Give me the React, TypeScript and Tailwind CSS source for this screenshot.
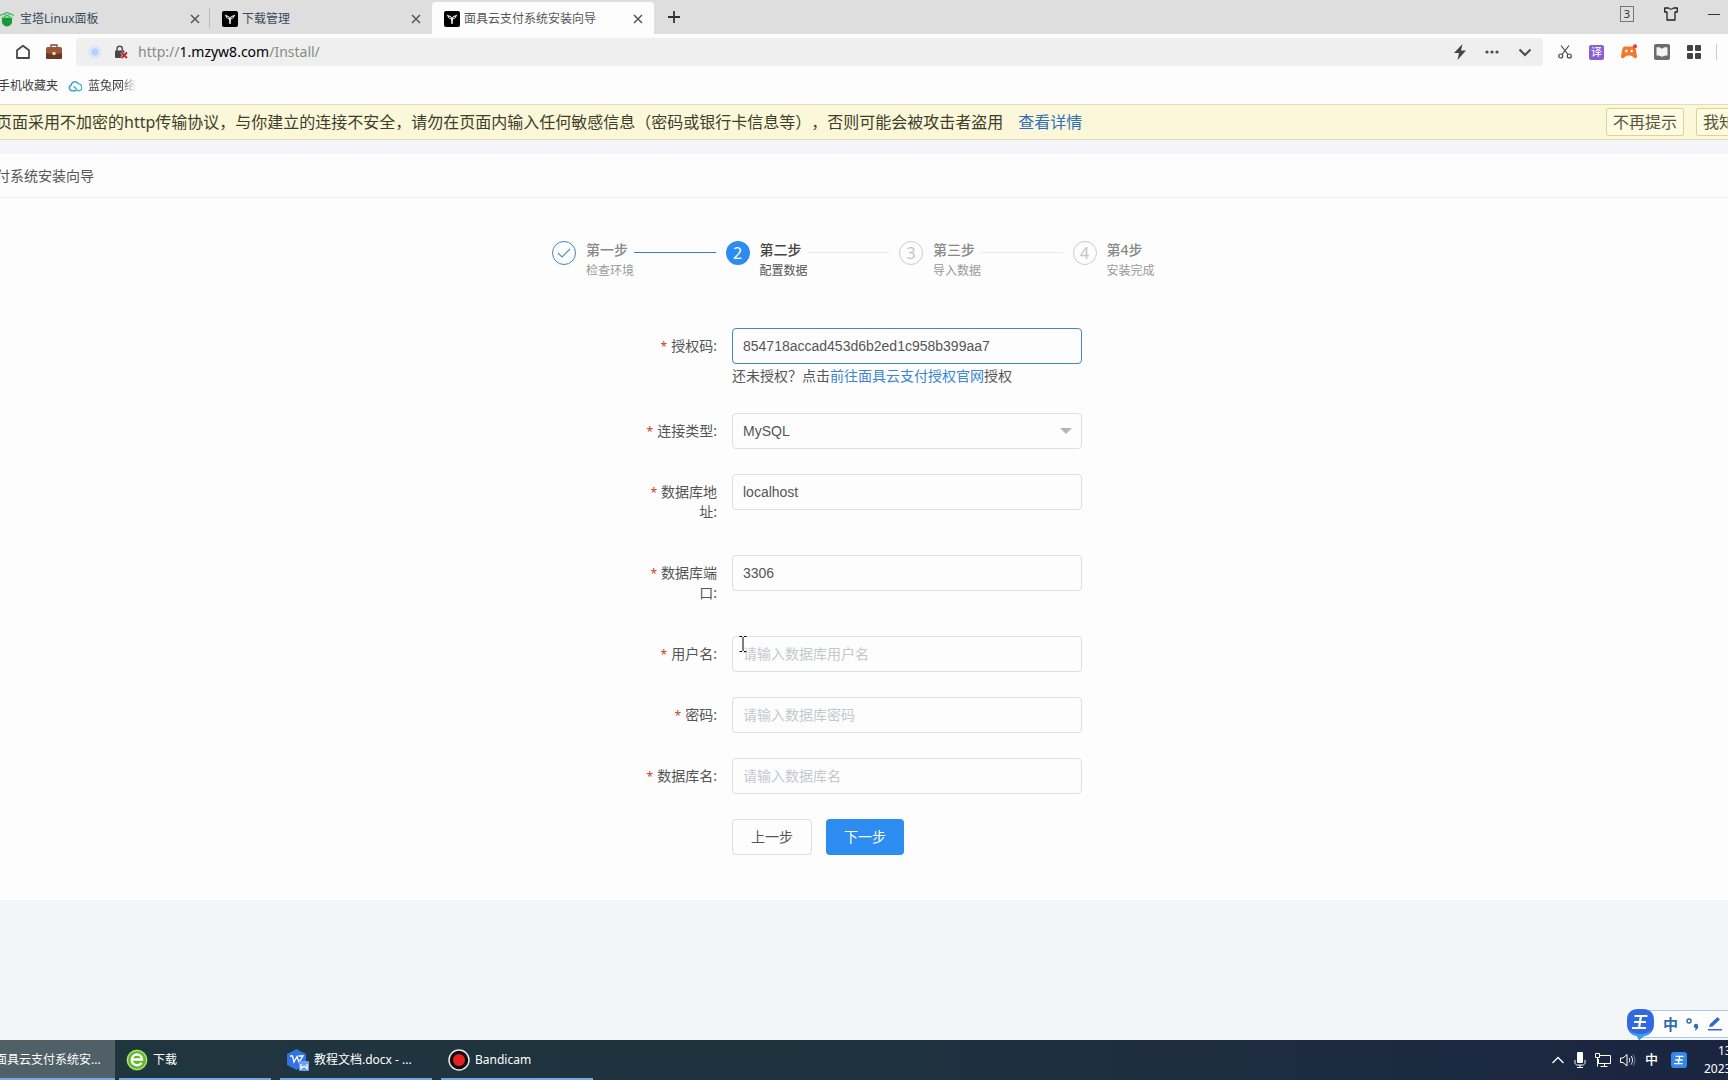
import { useState } from 'react';
import type { ReactNode } from 'react';

interface ITab {
  title: string;
  icon: ReactNode;
}

interface IField {
  id: string;
  label: string;
  value: string;
  placeholder?: string;
}

const fields: IField[] = [
  { id: 'hostname', label: '数据库地址', value: 'localhost' },
  { id: 'hostport', label: '数据库端口', value: '3306' },
  { id: 'username', label: '用户名', value: '', placeholder: '请输入数据库用户名' },
  { id: 'password', label: '密码', value: '', placeholder: '请输入数据库密码' },
  { id: 'database', label: '数据库名', value: '', placeholder: '请输入数据库名' },
];

const steps = [
  { title: '第一步', text: '检查环境', status: 'finish' },
  { title: '第二步', text: '配置数据', status: 'process' },
  { title: '第三步', text: '导入数据', status: 'wait' },
  { title: '第4步', text: '安装完成', status: 'wait' },
];

/* ---------- icons ---------- */

const PanelIcon = () => (
  <svg className="h-4 w-3.5 shrink-0" viewBox="0 0 14 16" aria-hidden="true">
    <path d="M2 6h10v5c0 2.500-2.500 4-5 4.500C4.500 15 2 13.500 2 11z" fill="#169a34" />
    <path d="M0 4.500 7 1.500l7 3M1.500 7 7 4.500 12.500 7M3.500 3 7 4.500 10.500 3" fill="none" stroke="#4bb463" strokeWidth="1.200" />
    <path d="M2 6.500h10" stroke="#7fce90" strokeWidth="1" />
  </svg>
);

const MaskIcon = () => (
  <svg className="size-4 shrink-0" viewBox="0 0 16 16" aria-hidden="true">
    <rect width="16" height="16" rx="2" fill="#000" />
    <path d="M2.500 3.500 6.500 5 8 6.500 9.500 5l4-1.500-2 3.500-2.500 1.500L8.700 13H7.300L7 8.500 4.500 7z" fill="#e6e6e6" />
    <path d="M5 6l2 1M11 6 9 7" stroke="#000" strokeWidth=".8" />
  </svg>
);

const CloseIcon = () => (
  <svg className="size-2.5" viewBox="0 0 10 10" fill="none" stroke="#555" strokeWidth="1.5" aria-hidden="true">
    <path d="M1 1l8 8M9 1 1 9" />
  </svg>
);

const HomeIcon = () => (
  <svg className="size-4" viewBox="0 0 16 16" fill="none" stroke="#484848" strokeWidth="1.8" strokeLinejoin="round" aria-hidden="true">
    <path d="M2 6.300 8 1.800l6 4.500V14H2z" />
  </svg>
);

const BriefcaseIcon = () => (
  <svg className="size-4" viewBox="0 0 16 16" aria-hidden="true">
    <path d="M5 3.500V1h6v2.500" fill="none" stroke="#7a4a34" strokeWidth="1.300" />
    <rect y="3" width="16" height="12" rx="1.500" fill="#98583c" />
    <path d="M0 9c5 1.500 11 1.500 16 0v4.500a1.500 1.500 0 0 1-1.500 1.500h-13A1.500 1.500 0 0 1 0 13.500z" fill="#6b3826" />
    <rect x="6.500" y="8" width="3" height="3" rx=".5" fill="#f3d9a0" />
  </svg>
);

const SiteIcon = () => (
  <svg className="size-3.5" viewBox="0 0 14 14" aria-hidden="true">
    <circle cx="7" cy="7" r="6.500" fill="#d5e4fa" />
    <circle cx="7" cy="7" r="4.300" fill="#b5d0fa" stroke="#eef5ff" />
  </svg>
);

const LockIcon = () => (
  <svg className="size-3.5" viewBox="0 0 14 14" aria-hidden="true">
    <path d="M3 6V4a2.700 2.700 0 0 1 5.400 0v2" fill="none" stroke="#555" strokeWidth="1.500" />
    <rect x="1" y="5.500" width="9.500" height="7.500" rx="1" fill="#4a4646" />
    <path d="M7.500 7.500l5.500 5.500M13 7.500 7.500 13" stroke="#efefef" strokeWidth="3" />
    <path d="M7.500 7.500l5.500 5.500M13 7.500 7.500 13" stroke="#b8292c" strokeWidth="1.800" />
  </svg>
);

const BoltIcon = () => (
  <svg className="h-4 w-3" viewBox="0 0 12 16" aria-hidden="true">
    <path d="M8.500 0 0 9h5L3.500 16 12 6.500H7z" fill="#444" />
  </svg>
);

const DotsIcon = () => (
  <svg className="size-3.5" viewBox="0 0 14 14" fill="#4a4a4a" aria-hidden="true">
    <circle cx="2" cy="7" r="1.600" />
    <circle cx="7" cy="7" r="1.600" />
    <circle cx="12" cy="7" r="1.600" />
  </svg>
);

const ChevronIcon = () => (
  <svg className="size-3.5" viewBox="0 0 14 14" fill="none" stroke="#4a4a4a" strokeWidth="2" aria-hidden="true">
    <path d="M1.500 4.500 7 10l5.500-5.500" />
  </svg>
);

const ScissorsIcon = () => (
  <svg className="size-3.5" viewBox="0 0 14 14" fill="none" stroke="#444" strokeWidth="1.200" aria-hidden="true">
    <circle cx="2.700" cy="11" r="2" />
    <circle cx="11.300" cy="11" r="2" />
    <path d="M3 .5l7 9M11 .5l-7 9" />
  </svg>
);

const GamepadIcon = () => (
  <svg className="size-4" viewBox="0 0 16 16" aria-hidden="true">
    <path d="M4 2.500h8c1.800 0 2.500 1.500 3 4l1 5.500c.2 2.200-1.800 3-3 1.800C11.500 12 10 11.500 8 11.500s-3.500.5-5 2.300C1.800 15-.2 14.200 0 12l1-5.500c.5-2.500 1.200-4 3-4z" fill="#ef7a2a" />
    <path d="M5.300 5.500v3M3.800 7h3" stroke="#fff" strokeWidth="1.200" />
    <circle cx="10.700" cy="7" r="1.200" fill="#fff" />
    <circle cx="14" cy="2.200" r="2" fill="#d8413c" />
  </svg>
);

const BookIcon = () => (
  <svg className="size-4" viewBox="0 0 16 16" aria-hidden="true">
    <rect width="16" height="16" rx="2" fill="#6d6d70" />
    <path d="M2.500 3.500C5 3 7 3.500 8 5c1-1.500 3-2 5.500-1.500v8C11 11.500 9 12 8 13c-1-1-3-1.500-5.500-1.500z" fill="#f3f3f3" />
  </svg>
);

const GridIcon = () => (
  <svg className="size-3.5" viewBox="0 0 14 14" fill="#444" aria-hidden="true">
    <rect width="6" height="6" rx="1" />
    <rect x="8" width="6" height="6" rx="1" />
    <rect y="8" width="6" height="6" rx="1" />
    <rect x="8" y="8" width="6" height="6" rx="1" />
  </svg>
);

const CloudIcon = () => (
  <svg className="h-3 w-3.5" viewBox="0 0 14 12" fill="none" strokeWidth="1.500" aria-hidden="true">
    <path d="M8 10.800H4A3 3 0 0 1 3.300 5 3.800 3.800 0 0 1 10.500 4" stroke="#4b9fc9" />
    <path d="M10.500 4a3.400 3.400 0 0 1 0 6.800C8 10.800 8 7 5.500 6.500" stroke="#37bccb" />
  </svg>
);

const ShirtIcon = () => (
  <svg className="size-3.5" viewBox="0 0 14 14" fill="none" stroke="#222" strokeWidth="1.300" strokeLinejoin="round" aria-hidden="true">
    <path d="M4.500 1C5.500 2.500 8.500 2.500 9.500 1H13.300V5H11V13H3V5H.7V1z" />
  </svg>
);

const BrowserIcon = () => (
  <svg className="size-[22px]" viewBox="0 0 22 22" aria-hidden="true">
    <circle cx="11" cy="11" r="10.500" fill="#63b82e" />
    <circle cx="11" cy="11" r="9.500" fill="none" stroke="#c8efa4" />
    <path d="M6 10.500h10c0-3-2.200-5-5-5s-5.200 2.300-5.200 5.400c0 3.200 2.300 5.300 5.200 5.300 2 0 3.600-.8 4.500-2.500" fill="none" stroke="#fff" strokeWidth="2.400" />
  </svg>
);

const DocIcon = () => (
  <svg className="size-[22px]" viewBox="0 0 22 22" aria-hidden="true">
    <path d="M9.500 0 19 5v11l-9.500 5L0 16V5z" fill="#2f74e0" />
    <path d="M3 7h2.500L7 13l3-5.500 2 5.500 4-6h-4.500" fill="none" stroke="#fff" strokeWidth="1.300" />
    <rect x="12" y="12" width="10" height="10" rx="1" fill="#6a9ff2" />
    <path d="M14 15v4.500l3-2.500 3 2.500V15" fill="none" stroke="#fff" strokeWidth="1.300" />
  </svg>
);

const RecordIcon = () => (
  <svg className="size-[22px]" viewBox="0 0 22 22" aria-hidden="true">
    <circle cx="11" cy="11" r="10" fill="#0c0c0c" stroke="#e8e8e8" strokeWidth="1.500" />
    <circle cx="11" cy="11" r="6" fill="#ea2020" />
  </svg>
);

// the three bars and stem of the input method's badge
const ImeMark = () => <path d="M7.500 7h13M7 13h12M5 19h14M14 7l-2 12" fill="none" stroke="#fff" strokeWidth="2.200" />;

/* ---------- browser frame ---------- */

const tabs: ITab[] = [
  { title: '宝塔Linux面板', icon: <PanelIcon /> },
  { title: '下载管理', icon: <MaskIcon /> },
  { title: '面具云支付系统安装向导', icon: <MaskIcon /> },
];

const TabBar = () => (
  <header className="flex h-[34px] bg-[#dedede] text-xs text-[#3d4a5c]">
    <div className="flex w-[210px] items-center gap-1.5 pt-1 pr-1.5">
      {tabs[0].icon}
      <span className="flex-1">{tabs[0].title}</span>
      <button aria-label="关闭标签页" className="p-1"><CloseIcon /></button>
    </div>
    <span className="mt-2 -ml-px h-5 w-px bg-[#bdbdbd]" />
    <div className="flex w-[222px] items-center gap-1 pt-1 pr-[7px] pl-3">
      {tabs[1].icon}
      <span className="flex-1">{tabs[1].title}</span>
      <button aria-label="关闭标签页" className="p-1"><CloseIcon /></button>
    </div>
    <div className="mt-0.5 flex w-[222px] items-center gap-1 rounded-t bg-[#fdfdfd] pt-0.5 pr-[7px] pl-3 text-[#555]">
      {tabs[2].icon}
      <span className="flex-1">{tabs[2].title}</span>
      <button aria-label="关闭标签页" className="p-1"><CloseIcon /></button>
    </div>
    <button aria-label="新建标签页" className="px-3.5">
      <svg className="size-3" viewBox="0 0 12 12" stroke="#333" strokeWidth="1.800" aria-hidden="true">
        <path d="M6 0v12M0 6h12" />
      </svg>
    </button>
    <div className="ml-auto flex items-center gap-[30px] pr-2 pb-1.5">
      <button className="flex h-4 w-3.5 items-center justify-center border border-[#777] text-[11px] text-[#333]">3</button>
      <button aria-label="皮肤"><ShirtIcon /></button>
      <button aria-label="最小化" className="h-px w-3 bg-[#333]" />
    </div>
  </header>
);

const Toolbar = () => (
  <div className="flex h-[38px] items-center bg-[#fdfdfd] pt-1 pb-1.5">
    <div className="flex items-center gap-[15px] pr-3.5 pl-[15px]">
      <button aria-label="主页"><HomeIcon /></button>
      <button aria-label="工具箱"><BriefcaseIcon /></button>
    </div>
    <div className="flex h-7 flex-1 items-center rounded bg-[#efefef] pr-[11px] pl-3">
      <SiteIcon />
      <span className="ml-3"><LockIcon /></span>
      <p className="ml-2.5 flex-1 text-sm text-[#8a8a8a]">
        http://<span className="text-black">1.mzyw8.com</span>/Install/
      </p>
      <div className="flex items-center gap-[19px]">
        <button aria-label="极速模式"><BoltIcon /></button>
        <button aria-label="更多"><DotsIcon /></button>
        <button aria-label="展开"><ChevronIcon /></button>
      </div>
    </div>
    <div className="flex items-center gap-[17px] pr-[11px] pl-[15px]">
      <button aria-label="截图"><ScissorsIcon /></button>
      <button className="flex size-[15px] items-center justify-center rounded-xs bg-[#8a5fd6] text-[11px] text-white">译</button>
      <button aria-label="游戏"><GamepadIcon /></button>
      <button aria-label="阅读"><BookIcon /></button>
      <button aria-label="扩展"><GridIcon /></button>
      <span className="-ml-0.5 h-4 w-px bg-[#ccc]" />
    </div>
  </div>
);

const Bookmarks = () => (
  <nav className="flex h-8 items-center bg-[#fdfdfd] pb-1 text-xs text-[#3c3c3c]">
    <a href="#mobile" className="-ml-0.5">手机收藏夹</a>
    <a href="#lantu" className="ml-2.5 flex items-center gap-1.5">
      <CloudIcon />
      <span className="bg-linear-to-r from-[#3c3c3c] from-70% to-transparent bg-clip-text text-transparent">蓝兔网络</span>
    </a>
  </nav>
);

const Notice = () => (
  <div className="flex h-9 items-center overflow-hidden border-y border-[#e6dcb4] bg-[#fbf7d9] text-base whitespace-nowrap text-[#3f3d2c]">
    <p className="-ml-1 flex-1 [text-spacing-trim:space-all]">
      页面采用不加密的http传输协议，与你建立的连接不安全，请勿在页面内输入任何敏感信息（密码或银行卡信息等），否则可能会被攻击者盗用
      <a href="#detail" className="ml-[15px] text-[#2f6fc0]">查看详情</a>
    </p>
    <div className="-mr-[30px] flex gap-3 text-[#5a563e]">
      <button className="h-7 rounded-xs border border-[#dfd48e] bg-[#fdfbe4] px-1.5">不再提示</button>
      <button className="h-7 rounded-xs border border-[#dfd48e] bg-[#fdfbe4] px-1.5">我知道</button>
    </div>
  </div>
);

/* ---------- install wizard ---------- */

const Steps = () => (
  <ol className="mx-auto flex w-full max-w-[694px]">
    {steps.map((step, i) => (
      <li key={step.title} className="flex flex-1 gap-2.5">
        {step.status === 'finish' && (
          <span className="mt-[3px] flex size-6 shrink-0 items-center justify-center rounded-full border border-[#4087bd]">
            <svg className="h-2.5 w-3.5" viewBox="0 0 14 10" fill="none" stroke="#5c8fb8" strokeWidth="1.200" aria-hidden="true">
              <path d="M1 5l4 4 8-8" />
            </svg>
          </span>
        )}
        {step.status === 'process' && (
          <span className="mt-[3px] flex size-6 shrink-0 items-center justify-center rounded-full bg-[#2d8cf0] text-base text-white">{i + 1}</span>
        )}
        {step.status === 'wait' && (
          <span className="mt-[3px] flex size-6 shrink-0 items-center justify-center rounded-full border border-[#ccc] text-base text-[#c4c4c4]">{i + 1}</span>
        )}
        <div className="flex-1 pt-0.5">
          <div className="flex items-center">
            <span className={step.status === 'process' ? 'text-sm font-medium text-[#444]' : 'text-sm font-medium text-[#888]'}>{step.title}</span>
            {i < steps.length - 1 && (
              <span className={step.status === 'finish' ? 'mt-1 mr-2.5 ml-1.5 h-px flex-1 bg-[#3c80bb]' : 'mt-1 mr-2.5 ml-1.5 h-px flex-1 bg-[#e6e8ea]'} />
            )}
          </div>
          <p className={step.status === 'process' ? 'mt-[3px] text-xs text-[#555]' : 'mt-[3px] text-xs text-[#999]'}>{step.text}</p>
        </div>
      </li>
    ))}
  </ol>
);

const Label = ({ id, text }: { id: string; text: string }) => (
  <label
    htmlFor={id}
    className="w-24 shrink-0 py-2 pr-[15px] pl-1 text-right text-sm break-all before:mr-1 before:text-xs before:text-[#c0452b] before:content-['*']"
  >
    {text}:
  </label>
);

const InstallForm = () => {
  const [code, setCode] = useState('854718accad453d6b2ed1c958b399aa7');
  const [values, setValues] = useState<Record<string, string>>(
    Object.fromEntries(fields.map((f) => [f.id, f.value]))
  );

  return (
    <form className="mx-auto flex w-full max-w-[446px] flex-col gap-[25px] text-sm text-[#555]" onSubmit={(e) => e.preventDefault()}>
      <div className="flex">
        <Label id="code" text="授权码" />
        <div className="flex-1">
          <input
            id="code"
            value={code}
            onChange={(e) => setCode(e.target.value)}
            className="block h-9 w-full rounded border border-[#4288b8] bg-[#fdfdfd] px-2.5 font-['Liberation_Sans'] outline-none"
          />
          <p className="h-6 leading-6">
            还未授权？点击<a href="#auth" className="text-[#3a86d0]">前往面具云支付授权官网</a>授权
          </p>
        </div>
      </div>

      <div className="flex">
        <Label id="type" text="连接类型" />
        <div className="relative flex-1">
          <select id="type" className="block h-9 w-full appearance-none rounded border border-[#dcdee2] bg-[#fdfdfd] px-2.5 font-['Liberation_Sans'] outline-none">
            <option>MySQL</option>
          </select>
          <svg className="pointer-events-none absolute top-[15px] right-2.5 h-1.5 w-3" viewBox="0 0 12 6" aria-hidden="true">
            <path d="M0 0h12L6 6z" fill="#b5b5b5" />
          </svg>
        </div>
      </div>

      {fields.map((field) => (
        <div key={field.id} className="flex">
          <Label id={field.id} text={field.label} />
          <div className="relative flex-1">
            <input
              id={field.id}
              value={values[field.id]}
              placeholder={field.placeholder}
              onChange={(e) => setValues({ ...values, [field.id]: e.target.value })}
              className="block h-9 w-full rounded border border-[#dcdee2] bg-[#fdfdfd] px-2.5 font-['Liberation_Sans','Noto_Sans_CJK_SC',sans-serif] outline-none placeholder:text-[#c5c8ce]"
            />
            {/* text cursor */}
            {field.id === 'username' && (
              <svg className="pointer-events-none absolute top-0 left-[7px] h-4 w-2" viewBox="0 0 8 16" fill="none" stroke="#000" aria-hidden="true">
                <path d="M.5.5h2.500M5 .5h2.500M4 1v14M.5 15.500h2.500M5 15.500h2.500" />
              </svg>
            )}
          </div>
        </div>
      ))}

      <div className="flex gap-3.5 pl-24">
        <button type="button" className="h-9 rounded border border-[#dcdee2] px-[18px]">上一步</button>
        <button type="submit" className="h-9 rounded bg-[#2d8cf0] px-[18px] text-white">下一步</button>
      </div>
    </form>
  );
};

/* ---------- desktop ---------- */

const ImeBar = () => (
  <div className="fixed right-0 bottom-[42px] flex h-7 w-[88px] items-center gap-2 border-y border-[#a9cbe6] bg-[#fdfdfd] pl-[23px] text-[#2f6ea8]">
    <svg className="absolute -top-0.5 -left-[13px] h-[31px] w-[27px]" viewBox="0 0 27 31" aria-hidden="true">
      <path d="M11 0h5c7 0 11 4 11 11v4c0 7-4 11-10 12l-5 4-2-4C4 26 0 22 0 15v-4C0 4 4 0 11 0z" fill="#3069e0" />
      <path d="M2 20c3 5 14 8 22 1-2 4-5 6-7 6l-5 4-2-4c-4-1-7-4-8-7z" fill="#3aa0ee" />
      <ImeMark />
    </svg>
    <span className="text-[15px] font-bold">中</span>
    <svg className="size-3.5" viewBox="0 0 14 14" aria-hidden="true">
      <circle cx="3" cy="4" r="2" fill="none" stroke="#2f6ea8" strokeWidth="1.500" />
      <circle cx="10" cy="9" r="2.200" fill="#2f6ea8" />
      <path d="M12.200 9c0 2-1 3.500-3 4.500l-.5-.8c1-.7 1.500-1.400 1.500-2.400z" fill="#2f6ea8" />
    </svg>
    <svg className="size-3.5" viewBox="0 0 14 14" aria-hidden="true">
      <path d="M1 10l1-3 7.500-7L12 2.500 4.500 9.500zM0 12h14v1.500H0z" fill="#2f6ed0" />
    </svg>
  </div>
);

const Taskbar = () => (
  <footer className="flex h-10 overflow-hidden bg-linear-to-r from-[#20363e] via-[#1f323f] to-[#1a2540] text-xs whitespace-nowrap text-white">
    <button className="flex w-[115px] items-center border-b-2 border-[#76a9e0] bg-[#4f6067] pt-0.5">
      <span className="-ml-[5px]">面具云支付系统安...</span>
    </button>
    <div className="flex flex-1 gap-[9px] pl-1">
      <button className="flex w-[152px] items-center gap-[5px] border-b-2 border-[#76a9e0] pt-0.5 pl-[7px]">
        <BrowserIcon />
        下载
      </button>
      <button className="flex w-[152px] items-center gap-[5px] border-b-2 border-[#76a9e0] pt-0.5 pl-[7px]">
        <DocIcon />
        教程文档.docx - ...
      </button>
      <button className="flex w-[152px] items-center gap-[5px] border-b-2 border-[#76a9e0] pt-0.5 pl-[7px]">
        <RecordIcon />
        Bandicam
      </button>
    </div>
    <div className="flex items-center gap-[9px]">
      <svg className="size-3.5" viewBox="0 0 14 14" fill="none" stroke="#fff" strokeWidth="1.300" aria-hidden="true">
        <path d="M1.500 10 7 4.500l5.500 5.500" />
      </svg>
      <svg className="h-4 w-3" viewBox="0 0 12 16" aria-hidden="true">
        <rect x="3" y="0" width="6" height="11" rx="1" fill="#fff" />
        <path d="M1 8v2.500C1 12 2 13 3.500 13h5c1.500 0 2.500-1 2.500-2.500V8M6 13v2.500M3 15.500h6" fill="none" stroke="#fff" />
      </svg>
      <svg className="size-4" viewBox="0 0 16 16" fill="none" stroke="#fff" aria-hidden="true">
        <path d="M5 3.500h10.500v8H3.500V7M9.500 11.500v3M5.500 14.500h7M.5 1.500h4v4h-4zM2.500 5.500v9" />
      </svg>
      <svg className="size-4" viewBox="0 0 16 16" fill="none" stroke="#fff" aria-hidden="true">
        <path d="M.5 6v4.500H3l4 3.500V2.500L3 6zM9 6c1 1.300 1 3.200 0 4.500M11 4c2 2.500 2 6 0 8.500" />
        <path d="M13 2.500c2.500 3.500 2.500 8 0 11.500" stroke="#76808e" />
      </svg>
      <span className="text-[13px] font-medium">中</span>
      <svg className="ml-1 size-4" viewBox="0 0 26 26" aria-hidden="true">
        <rect width="26" height="26" rx="5" fill="#3388ea" />
        <ImeMark />
      </svg>
      <div className="ml-2 w-6 overflow-hidden">
        <p className="pl-3.5 leading-[18px]">13</p>
        <p className="leading-[18px]">2023</p>
      </div>
    </div>
  </footer>
);

export default function App() {
  return (
    <div className="flex min-h-screen flex-col overflow-x-hidden bg-[#f3f5f8] font-['Noto_Sans','Noto_Sans_CJK_SC',sans-serif]">
      <TabBar />
      <Toolbar />
      <Bookmarks />
      <Notice />
      <main className="mt-3.5 flex-1">
        <div className="bg-[#fdfdfd] pb-[45px]">
          <h1 className="flex h-11 items-center border-b border-[#eff0f2] text-sm text-[#555]">
            <span className="-ml-1">付系统安装向导</span>
          </h1>
          <div className="pt-10 pl-[70px]">
            <Steps />
          </div>
          <div className="pt-[49px] pr-2.5">
            <InstallForm />
          </div>
        </div>
      </main>
      <ImeBar />
      <Taskbar />
    </div>
  );
}
